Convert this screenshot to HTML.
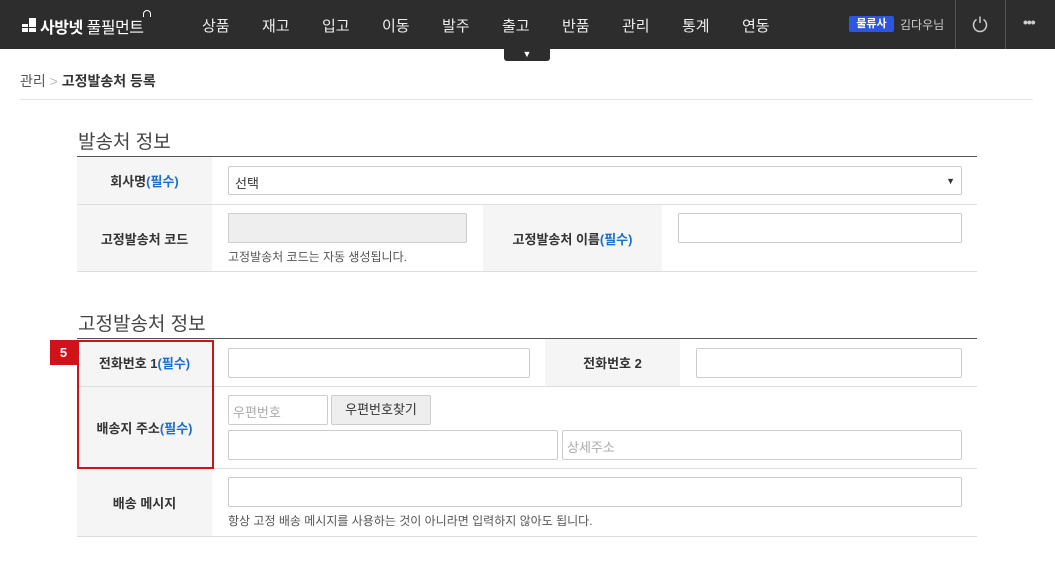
<!DOCTYPE html>
<html><head><meta charset="utf-8"><style>
*{box-sizing:border-box;margin:0;padding:0}
body{width:1055px;height:572px;background:#fff;font-family:"Liberation Sans","Noto Sans CJK KR",sans-serif;color:#333;position:relative;overflow:hidden;font-size:13px}
.hd{position:absolute;left:0;top:0;width:1055px;height:49px;background:#2d2d2d}
.abs{position:absolute}
.menu{color:#eee;font-size:15px;top:15px}
.lbl{position:absolute;background:#f5f5f5;font-weight:bold;font-size:13px;color:#333;display:flex;align-items:center;justify-content:center}
.req{color:#1a6fd0}
.inp{position:absolute;border:1px solid #ccc;border-radius:2px;background:#fff}
.hl{position:absolute;height:1px;background:#ddd}
.hint{position:absolute;font-size:12px;color:#555}
</style></head><body>
<div class="hd"></div>
<div class="abs" style="left:22px;top:18px;width:14px;height:14px;">
<div class="abs" style="left:0;top:6px;width:6px;height:8px;background:#fff"></div>
<div class="abs" style="left:7px;top:0;width:7px;height:14px;background:#fff"></div>
<div class="abs" style="left:0;top:9px;width:14px;height:1px;background:#2d2d2d"></div></div>
<div class="abs" style="left:40px;top:14px;color:#fff;font-size:16px;font-weight:bold;letter-spacing:-0.5px">사방넷 <span style="font-weight:normal">풀필먼트</span></div>
<div class="abs" style="left:143px;top:10px;width:8px;height:7px;border:1px solid #fff;border-bottom:none;border-radius:4px 4px 0 0"></div>
<div class="abs menu" style="left:202px">상품</div>
<div class="abs menu" style="left:262px">재고</div>
<div class="abs menu" style="left:322px">입고</div>
<div class="abs menu" style="left:382px">이동</div>
<div class="abs menu" style="left:442px">발주</div>
<div class="abs menu" style="left:502px">출고</div>
<div class="abs menu" style="left:562px">반품</div>
<div class="abs menu" style="left:622px">관리</div>
<div class="abs menu" style="left:682px">통계</div>
<div class="abs menu" style="left:742px">연동</div>
<div class="abs" style="left:504px;top:49px;width:46px;height:12px;background:#2d2d2d;border-radius:0 0 3px 3px;color:#fff;font-size:9px;text-align:center;line-height:10px">▼</div>
<div class="abs" style="left:849px;top:16px;width:45px;height:16px;background:#2e55e0;border-radius:2px;color:#fff;font-size:11px;font-weight:bold;text-align:center;line-height:16px">물류사</div>
<div class="abs" style="left:900px;top:16px;color:#ccc;font-size:12px">김다우님</div>
<div class="abs" style="left:955px;top:0;width:1px;height:49px;background:#555"></div>
<div class="abs" style="left:1005px;top:0;width:1px;height:49px;background:#555"></div>
<svg class="abs" style="left:971px;top:15px" width="18" height="18" viewBox="0 0 18 18"><path d="M5.5 4.5A6.5 6.5 0 1 0 12.5 4.5" fill="none" stroke="#ccc" stroke-width="1.5"/><path d="M9 1.5V8" stroke="#ccc" stroke-width="1.5"/></svg>
<div class="abs" style="left:1023px;top:14px;color:#ccc;font-size:14px;font-weight:bold;letter-spacing:-1px">•••</div>

<div class="abs" style="left:20px;top:71px;font-size:14px;color:#555">관리 <span style="color:#bbb">&gt;</span> <b style="color:#333">고정발송처 등록</b></div>
<div class="hl" style="left:20px;top:99px;width:1013px;background:#e5e5e5"></div>

<div class="abs" style="left:78px;top:127px;font-size:19px;color:#444">발송처 정보</div>
<div class="abs" style="left:77px;top:156px;width:900px;height:1px;background:#555"></div>
<div class="lbl" style="left:77px;top:157px;width:135px;height:47px">회사명<span class="req">(필수)</span></div>
<div class="hl" style="left:77px;top:204px;width:900px"></div>
<div class="inp" style="left:228px;top:166px;width:734px;height:29px;padding:6px 6px;font-size:13px">선택<span style="float:right;font-size:9px;margin-top:3px">▼</span></div>
<div class="lbl" style="left:77px;top:205px;width:135px;height:66px">고정발송처 코드</div>
<div class="inp" style="left:228px;top:213px;width:239px;height:30px;background:#eee"></div>
<div class="hint" style="left:228px;top:248px">고정발송처 코드는 자동 생성됩니다.</div>
<div class="lbl" style="left:483px;top:205px;width:179px;height:66px">고정발송처 이름<span class="req">(필수)</span></div>
<div class="inp" style="left:678px;top:213px;width:284px;height:30px"></div>
<div class="hl" style="left:77px;top:271px;width:900px"></div>

<div class="abs" style="left:78px;top:309px;font-size:19px;color:#444">고정발송처 정보</div>
<div class="abs" style="left:77px;top:338px;width:900px;height:1px;background:#555"></div>
<div class="lbl" style="left:77px;top:339px;width:135px;height:47px">전화번호 1<span class="req">(필수)</span></div>
<div class="inp" style="left:228px;top:348px;width:302px;height:30px"></div>
<div class="lbl" style="left:545px;top:339px;width:135px;height:47px">전화번호 2</div>
<div class="inp" style="left:696px;top:348px;width:266px;height:30px"></div>
<div class="hl" style="left:77px;top:386px;width:900px"></div>
<div class="lbl" style="left:77px;top:387px;width:135px;height:81px">배송지 주소<span class="req">(필수)</span></div>
<div class="inp" style="left:228px;top:395px;width:100px;height:30px;padding:6px 4px;color:#aaa">우편번호</div>
<div class="inp" style="left:331px;top:395px;width:100px;height:30px;background:#eee;text-align:center;line-height:28px;color:#333">우편번호찾기</div>
<div class="inp" style="left:228px;top:430px;width:330px;height:30px"></div>
<div class="inp" style="left:562px;top:430px;width:400px;height:30px;padding:6px 4px;color:#aaa">상세주소</div>
<div class="hl" style="left:77px;top:468px;width:900px"></div>
<div class="lbl" style="left:77px;top:469px;width:135px;height:67px">배송 메시지</div>
<div class="inp" style="left:228px;top:477px;width:734px;height:30px"></div>
<div class="hint" style="left:228px;top:512px">항상 고정 배송 메시지를 사용하는 것이 아니라면 입력하지 않아도 됩니다.</div>
<div class="hl" style="left:77px;top:536px;width:900px"></div>

<div class="abs" style="left:77px;top:340px;width:137px;height:129px;border:2px solid #d0121b"></div>
<div class="abs" style="left:50px;top:340px;width:27px;height:25px;background:#d0121b;color:#fff;font-weight:bold;font-size:13px;text-align:center;line-height:25px">5</div>
</body></html>
